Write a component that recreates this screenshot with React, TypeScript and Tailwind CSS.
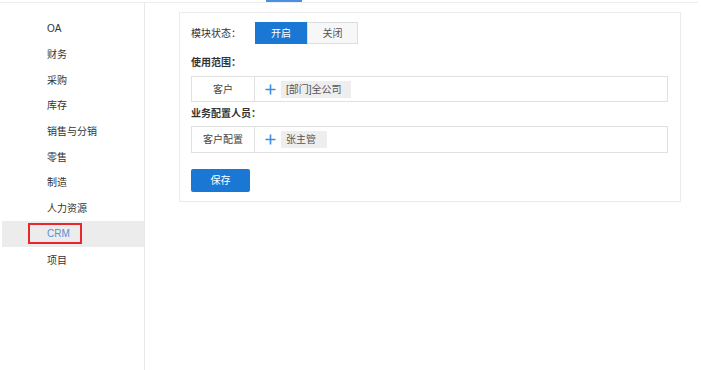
import React from "react";

const menu = ["OA", "财务", "采购", "库存", "销售与分销", "零售", "制造", "人力资源", "CRM", "项目"];

const Plus = () => (
    <svg width="11" height="11" viewBox="0 0 11 11" className="mr-[5px]">
        <path d="M5.5 0.5v10M0.5 5.5h10" stroke="#3b8ee0" strokeWidth="1.6" />
    </svg>
);

const App = () => {
    const active = "CRM";
    return (
        <div className="w-[701px] h-[370px] bg-white overflow-hidden text-[#333] font-['Liberation_Sans','Noto_Sans_CJK_SC',sans-serif]">
            {/* top bar fragment */}
            <div className="h-[3px] w-[698px] border-b border-[#eee]">
                <div className="ml-[266px] w-[36px] h-[2px] bg-[#4a90e2]" />
            </div>
            <div className="flex h-[367px]">
                {/* sidebar */}
                <div className="w-[145px] shrink-0 border-r border-[#e8e8e8] pt-[12px]">
                    {menu.map((m) =>
                        m === active ? (
                            <div key={m} className="ml-[2px] h-[26px] bg-[#ececec] flex items-center pl-[26px]">
                                <div className="w-[54px] h-[21px] border-2 border-[#e8262d] flex items-center pl-[17px] text-[10px] text-[#5b8fd6]">
                                    {m}
                                </div>
                            </div>
                        ) : (
                            <div key={m} className="h-[25.7px] flex items-center pl-[47px] pt-[2px] text-[10px] text-[#333]">
                                {m}
                            </div>
                        )
                    )}
                </div>
                {/* content */}
                <div className="flex-1">
                    <div className="ml-[34px] mt-[9px] w-[502px] h-[190px] border border-[#ebebeb] pl-[11px] pt-[9px] text-[10px]">
                        <div className="flex items-center h-[22px]">
                            <div className="w-[64px] text-[#333]">模块状态：</div>
                            <button className="w-[52px] h-[22px] bg-[#1a78d4] text-white text-[10px]">开启</button>
                            <button className="w-[51px] h-[22px] bg-[#f7f7f7] border border-[#ddd] text-[#555] text-[10px]">关闭</button>
                        </div>
                        <div className="mt-[13px] h-[12px] leading-[12px] font-bold">使用范围：</div>
                        <div className="mt-[7px] w-[477px] h-[26px] border border-[#e0e0e0] flex">
                            <div className="w-[63px] border-r border-[#e0e0e0] flex items-center justify-center text-[#444]">客户</div>
                            <div className="flex items-center pl-[10px]">
                                <Plus />
                                <div className="h-[17px] w-[70px] bg-[#eee] flex items-center pl-[5px] text-[#555]">[部门]全公司</div>
                            </div>
                        </div>
                        <div className="mt-[6px] h-[12px] leading-[12px] font-bold">业务配置人员：</div>
                        <div className="mt-[6px] w-[477px] h-[27px] border border-[#e0e0e0] flex">
                            <div className="w-[63px] border-r border-[#e0e0e0] flex items-center justify-center text-[#444]">客户配置</div>
                            <div className="flex items-center pl-[10px]">
                                <Plus />
                                <div className="h-[17px] w-[46px] bg-[#eee] flex items-center pl-[5px] text-[#555]">张主管</div>
                            </div>
                        </div>
                        <button className="mt-[16px] w-[59px] h-[23px] bg-[#1a78d4] rounded-[2px] text-white text-[10px]">保存</button>
                    </div>
                </div>
            </div>
        </div>
    );
};

export default App;
